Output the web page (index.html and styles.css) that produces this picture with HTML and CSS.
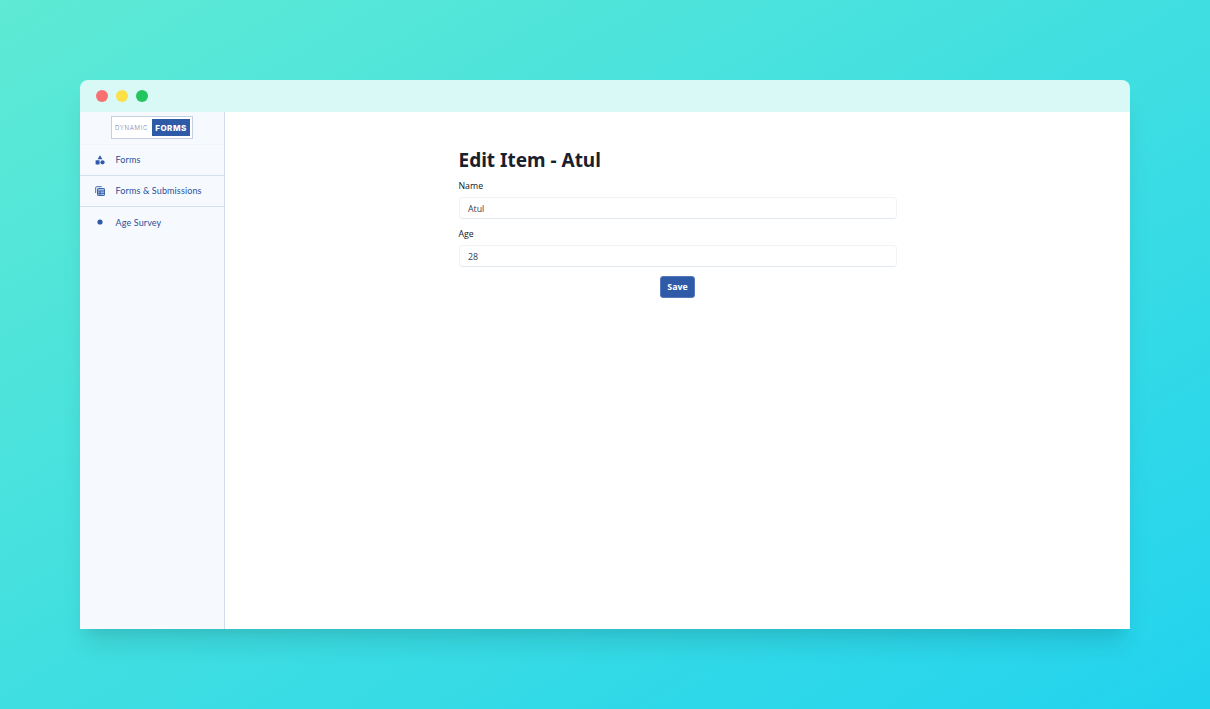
FILE: index.html
```html
<!DOCTYPE html>
<html lang="en">
<head>
<meta charset="utf-8">
<title>Edit Item - Atul</title>
<link rel="stylesheet" href="styles.css">
</head>
<body>
<div class="window">
  <div class="titlebar">
    <span class="dot dot-red"></span>
    <span class="dot dot-yellow"></span>
    <span class="dot dot-green"></span>
  </div>
  <div class="app">
    <aside class="sidebar">
      <div class="logo-row">
        <div class="logo"><span class="logo-light">DYNAMIC</span><span class="logo-dark">FORMS</span></div>
      </div>
      <a class="nav-item">
        <svg class="nav-icon" viewBox="0 0 10 10"><path d="M5 .2 7.4 4.3H2.6Z"/><rect x=".6" y="5.2" width="4" height="4.2" rx=".4"/><circle cx="7.5" cy="7.3" r="2.1"/></svg>
        <span>Forms</span>
      </a>
      <a class="nav-item">
        <svg class="nav-icon nav-icon-line" viewBox="0 0 10 10"><path d="M.7 7V1.4q0-.7.7-.7h5.4"/><rect x="2.5" y="2.5" width="7" height="7" rx=".6" class="fill-soft"/><path d="M2.5 5h7M2.5 7.3h7M5 5v4.5"/></svg>
        <span>Forms &amp; Submissions</span>
      </a>
      <a class="nav-item">
        <svg class="nav-icon" viewBox="0 0 10 10"><circle cx="5" cy="5" r="2.6"/></svg>
        <span>Age Survey</span>
      </a>
    </aside>
    <main class="content">
      <form class="form">
        <h1 class="title">Edit Item - Atul</h1>
        <label class="label">Name</label>
        <div class="input">Atul</div>
        <label class="label">Age</label>
        <div class="input">28</div>
        <div class="actions"><button class="save" type="button">Save</button></div>
      </form>
    </main>
  </div>
</div>
</body>
</html>
```
FILE: styles.css
```css
* { box-sizing: border-box; }
html, body { height: 100%; }
body {
  margin: 0;
  height: 709px;
  padding: 80px;
  overflow: hidden;
  background: linear-gradient(to bottom right, #5eead4, #22d3ee);
  font-family: "Open Sans", "Noto Sans", sans-serif;
}
.window {
  height: 549px;
  display: flex;
  flex-direction: column;
  border-radius: 8px 8px 0 0;
  box-shadow: 0 20px 25px -5px rgba(0, 0, 0, .1), 0 10px 10px -5px rgba(0, 0, 0, .04);
}
.titlebar {
  height: 32px;
  flex: none;
  display: flex;
  align-items: center;
  gap: 8px;
  padding-left: 16px;
  background: #d8f9f6;
  border-radius: 8px 8px 0 0;
}
.dot { width: 12px; height: 12px; border-radius: 50%; }
.dot-red { background: #f87171; }
.dot-yellow { background: #fde047; }
.dot-green { background: #22c55e; }
.app { flex: 1; display: flex; min-height: 0; background: #fff; }
.sidebar {
  width: 145px;
  flex: none;
  background: #f6fafe;
  border-right: 1px solid #cfdcec;
}
.logo-row {
  height: 33px;
  display: flex;
  justify-content: center;
  align-items: flex-start;
  padding-top: 4px;
  border-bottom: 1px solid #f1f5f9;
}
.logo {
  width: 82px;
  height: 23px;
  display: flex;
  align-items: stretch;
  padding: 2px;
  background: #fff;
  border: 1px solid #c4cfe2;
  font-family: "Inter", sans-serif;
}
.logo-light {
  flex: 1;
  color: #6d7ea8;
  font-size: 6px;
  font-weight: 300;
  letter-spacing: .72px;
  line-height: 18px;
  padding-left: 1px;
  white-space: nowrap;
  overflow: hidden;
}
.logo-dark {
  width: 38px;
  flex: none;
  background: #2f5aa8;
  color: #fff;
  font-size: 8px;
  font-weight: 800;
  letter-spacing: .5px;
  line-height: 18px;
  text-align: center;
}
.nav-item {
  height: 31px;
  display: flex;
  align-items: center;
  gap: 10.5px;
  padding-left: 15px;
  padding-bottom: 1px;
  color: #2c4f98;
  font-family: "Lato", sans-serif;
  font-size: 9px;
  letter-spacing: .12px;
  border-bottom: 1px solid #d6e0ec;
}
.nav-item:last-child { border-bottom: 0; }
.nav-icon { width: 10px; height: 10px; flex: none; fill: #2f5aa8; }
.nav-icon-line { fill: none; stroke: #2f5aa8; stroke-width: .9; }
.fill-soft { fill: #a9bfe0; }
.content { flex: 1; display: flex; justify-content: center; padding: 36px 0 0 0; }
.form { width: 438px; }
.title {
  margin: 0;
  color: #1a202c;
  font-family: "Noto Sans", sans-serif;
  font-size: 19px;
  line-height: 24px;
  font-weight: 700;
}
.label {
  display: block;
  margin-top: 8px;
  height: 12px;
  color: #111827;
  font-size: 8.8px;
  line-height: 12px;
}
.input {
  height: 22px;
  margin-top: 5px;
  padding-left: 8.5px;
  border: 1px solid #f1f3f7;
  border-bottom-color: #e2e8f0;
  border-radius: 4px;
  background: #fff;
  color: #374151;
  font-size: 8.8px;
  line-height: 22px;
}
.input + .label { margin-top: 9px; }
.actions { display: flex; justify-content: center; margin-top: 9px; }
.save {
  width: 35px;
  height: 22px;
  padding: 0 0 1px;
  border: 1px solid #5578b8;
  border-radius: 3px;
  background: #2f5aa8;
  color: #fff;
  font: 700 8.8px "Open Sans", sans-serif;
}
```
